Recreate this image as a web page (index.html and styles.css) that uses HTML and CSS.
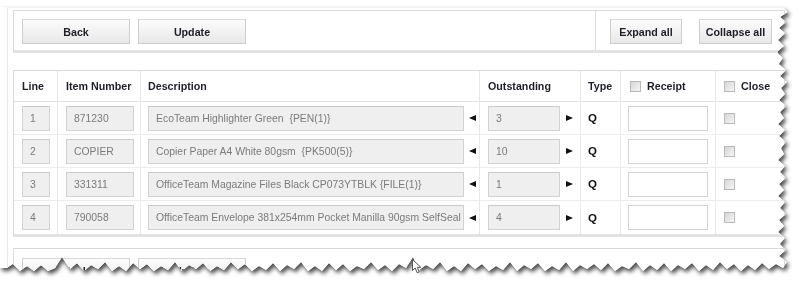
FILE: index.html
```html
<!DOCTYPE html>
<html lang="en">
<head>
    <meta charset="UTF-8">
    <meta name="viewport" content="width=device-width, initial-scale=1.0">
    <title>Receipt</title>
    <link rel="stylesheet" href="styles.css">
</head>
<body>

    <div class="frame">
        <div class="sheet">
            <div class="page">

                <!-- Top toolbar -->
                <div class="panel toolbar">
                    <div class="toolbar-left">
                        <button class="btn btn-wide">Back</button>
                        <button class="btn btn-wide">Update</button>
                    </div>
                    <div class="toolbar-right">
                        <button class="btn btn-expand">Expand all</button>
                        <button class="btn btn-collapse">Collapse all</button>
                    </div>
                </div>

                <!-- Lines -->
                <div class="panel lines">
                    <table class="lines-table">
                        <colgroup>
                            <col class="c-line">
                            <col class="c-item">
                            <col class="c-desc">
                            <col class="c-out">
                            <col class="c-type">
                            <col class="c-rec">
                            <col>
                        </colgroup>
                        <thead>
                            <tr>
                                <th>Line</th>
                                <th>Item Number</th>
                                <th class="pad7">Description</th>
                                <th>Outstanding</th>
                                <th class="pad7">Type</th>
                                <th class="pad9"><span class="check"></span>Receipt</th>
                                <th><span class="check"></span>Close</th>
                            </tr>
                        </thead>
                        <tbody>
                            <tr>
                                <td><input class="field f-line" value="1" readonly></td>
                                <td><input class="field f-item" value="871230" readonly></td>
                                <td class="pad7"><div class="cell-row"><input class="field f-desc" value="EcoTeam Highlighter Green  {PEN(1)}" readonly><span class="arrow-left"></span></div></td>
                                <td><div class="cell-row"><input class="field f-out" value="3" readonly><span class="arrow-right"></span></div></td>
                                <td class="pad7 type">Q</td>
                                <td class="pad7"><input class="receipt"></td>
                                <td class="top"><span class="check"></span></td>
                            </tr>
                            <tr>
                                <td><input class="field f-line" value="2" readonly></td>
                                <td><input class="field f-item" value="COPIER" readonly></td>
                                <td class="pad7"><div class="cell-row"><input class="field f-desc" value="Copier Paper A4 White 80gsm  {PK500(5)}" readonly><span class="arrow-left"></span></div></td>
                                <td><div class="cell-row"><input class="field f-out" value="10" readonly><span class="arrow-right"></span></div></td>
                                <td class="pad7 type">Q</td>
                                <td class="pad7"><input class="receipt"></td>
                                <td class="top"><span class="check"></span></td>
                            </tr>
                            <tr>
                                <td><input class="field f-line" value="3" readonly></td>
                                <td><input class="field f-item" value="331311" readonly></td>
                                <td class="pad7"><div class="cell-row"><input class="field f-desc" value="OfficeTeam Magazine Files Black CP073YTBLK {FILE(1)}" readonly><span class="arrow-left"></span></div></td>
                                <td><div class="cell-row"><input class="field f-out" value="1" readonly><span class="arrow-right"></span></div></td>
                                <td class="pad7 type">Q</td>
                                <td class="pad7"><input class="receipt"></td>
                                <td class="top"><span class="check"></span></td>
                            </tr>
                            <tr>
                                <td><input class="field f-line" value="4" readonly></td>
                                <td><input class="field f-item" value="790058" readonly></td>
                                <td class="pad7"><div class="cell-row"><input class="field f-desc" value="OfficeTeam Envelope 381x254mm Pocket Manilla 90gsm SelfSeal Board Back {ENV(250)}" readonly><span class="arrow-left"></span></div></td>
                                <td><div class="cell-row"><input class="field f-out" value="4" readonly><span class="arrow-right"></span></div></td>
                                <td class="pad7 type">Q</td>
                                <td class="pad7"><input class="receipt"></td>
                                <td class="top"><span class="check"></span></td>
                            </tr>
                        </tbody>
                    </table>
                </div>

                <!-- Bottom toolbar -->
                <div class="panel toolbar bottom-bar">
                    <div class="toolbar-left">
                        <button class="btn btn-wide">Back</button>
                        <button class="btn btn-wide">Update</button>
                    </div>
                </div>

            </div>
        </div>
    </div>

    <!-- mouse pointer left in the capture -->
    <svg class="pointer" width="11" height="15" viewBox="0 0 11 15">
        <path d="M0.5 0.5 L0.5 11.5 L3.2 9 L5.2 13.8 L7.2 12.9 L5.3 8.3 L8.8 8.3 Z" fill="#fff" stroke="#555" stroke-width="1"/>
    </svg>

</body>
</html>
```

FILE: styles.css
```css
body {
    margin: 0;
    padding: 0;
    background: white;
    font-family: "Liberation Sans", Arial, sans-serif;
    color: #222;
}
.frame {
    filter: drop-shadow(2px 3px 2px rgba(0, 0, 0, 0.7));
}
.sheet {
    width: 800px;
    height: 287px;
    box-sizing: border-box;
    padding: 7px 0 0 7px;
    background: white;
    overflow: hidden;
    clip-path: polygon(0 7px, 783px 7px, 788px 12px, 780px 17px, 786px 22px, 779px 28px, 785px 33px, 778px 40px, 784px 46px, 777px 52px, 783px 58px, 779px 64px, 786px 70px, 780px 76px, 787px 82px, 781px 88px, 785px 94px, 779px 100px, 786px 106px, 780px 112px, 784px 118px, 778px 124px, 785px 130px, 779px 136px, 786px 142px, 781px 148px, 784px 154px, 778px 160px, 785px 166px, 780px 172px, 786px 178px, 779px 184px, 784px 190px, 778px 196px, 785px 202px, 780px 208px, 786px 214px, 779px 220px, 784px 226px, 778px 232px, 785px 238px, 780px 244px, 786px 250px, 779px 256px, 787px 262px, 783px 268px, 776px 264px, 769px 269px, 762px 263px, 755px 270px, 748px 265px, 741px 271px, 734px 264px, 727px 269px, 720px 262px, 713px 270px, 706px 265px, 699px 271px, 692px 263px, 685px 269px, 678px 265px, 671px 271px, 664px 263px, 657px 270px, 650px 265px, 643px 271px, 636px 262px, 629px 269px, 622px 266px, 615px 271px, 608px 263px, 601px 270px, 594px 264px, 587px 269px, 580px 265px, 573px 271px, 566px 262px, 559px 270px, 552px 266px, 545px 271px, 538px 263px, 531px 269px, 524px 265px, 517px 271px, 510px 262px, 503px 270px, 496px 266px, 489px 271px, 482px 264px, 475px 269px, 468px 263px, 461px 271px, 454px 266px, 447px 271px, 440px 262px, 433px 269px, 426px 265px, 419px 270px, 413px 257px, 406px 268px, 399px 264px, 392px 271px, 385px 265px, 378px 270px, 371px 262px, 364px 269px, 357px 266px, 350px 271px, 343px 264px, 336px 270px, 329px 263px, 322px 271px, 315px 266px, 308px 271px, 301px 262px, 294px 269px, 287px 265px, 280px 271px, 273px 263px, 266px 270px, 259px 266px, 252px 271px, 245px 264px, 238px 269px, 231px 262px, 224px 270px, 217px 266px, 210px 271px, 203px 263px, 196px 269px, 189px 265px, 182px 271px, 175px 262px, 168px 270px, 161px 266px, 154px 271px, 147px 264px, 140px 269px, 133px 263px, 126px 271px, 119px 266px, 112px 271px, 105px 262px, 98px 269px, 91px 265px, 84px 271px, 77px 263px, 70px 269px, 62px 257px, 55px 268px, 48px 271px, 41px 265px, 34px 271px, 27px 266px, 20px 271px, 13px 264px, 7px 268px, 0 268px);
}
.page {
    border-left: 1px solid #ebebeb;
    border-top: 1px solid #f2f2f2;
    padding: 2px 0 0 5px;
    height: 400px;
}
.panel {
    width: 772px;
    box-sizing: border-box;
    background: white;
    border: 1px solid #dadada;
    border-bottom: 3px solid #e3e3e3;
}
.toolbar {
    display: flex;
}
.toolbar-left {
    flex: 1;
    display: flex;
    gap: 8px;
    padding: 8px 0 6px 8px;
}
.toolbar-right {
    width: 189px;
    box-sizing: border-box;
    border-left: 1px solid #dcdcdc;
    display: flex;
    gap: 17px;
    padding: 8px 0 6px 14px;
}
.btn {
    height: 25px;
    padding: 0;
    margin: 0;
    background: linear-gradient(#fcfcfc, #e8e8e8);
    border: 1px solid #cdcdcd;
    border-top-color: #d8d8d8;
    color: #1e1e28;
    font-family: "Liberation Sans", Arial, sans-serif;
    font-size: 10.7px;
    font-weight: bold;
    cursor: pointer;
}
.btn:hover {
    background: linear-gradient(#ffffff, #f0f0f0);
}
.btn-wide {
    width: 108px;
}
.btn-expand {
    width: 72px;
}
.btn-collapse {
    width: 73px;
}
.lines {
    margin-top: 17px;
}
.bottom-bar {
    margin-top: 11px;
    padding-top: 1px;
}
.lines-table {
    width: 100%;
    table-layout: fixed;
    border-collapse: separate;
    border-spacing: 0;
}
.c-line { width: 44px; }
.c-item { width: 83px; }
.c-desc { width: 339px; }
.c-out { width: 101px; }
.c-type { width: 40px; }
.c-rec { width: 95px; }
.lines-table th,
.lines-table td {
    box-sizing: border-box;
    padding: 0 0 0 8px;
    border-right: 1px solid #e8e8e8;
    border-bottom: 1px solid #ececec;
    text-align: left;
    white-space: nowrap;
}
.lines-table th:last-child,
.lines-table td:last-child {
    border-right: none;
}
.lines-table tbody tr:last-child td {
    border-bottom: none;
}
.lines-table th {
    height: 31px;
    font-size: 10.7px;
    font-weight: bold;
    color: #1e1e28;
    border-bottom-color: #e2e2e2;
}
.lines-table td {
    height: 33px;
}
.lines-table .pad7 {
    padding-left: 7px;
}
.lines-table .pad9 {
    padding-left: 9px;
}
.lines-table .top {
    vertical-align: top;
    padding-top: 6px;
}
.type {
    font-size: 11.5px;
    font-weight: bold;
    color: #111;
}
.cell-row {
    display: flex;
    align-items: center;
}
.field {
    display: block;
    height: 25px;
    box-sizing: border-box;
    margin: 0;
    padding: 0 0 0 7px;
    background: #efefef;
    border: 1px solid #d3d3d3;
    border-top-color: #cbcbcb;
    color: #7b7b7b;
    font-family: "Liberation Sans", Arial, sans-serif;
    font-size: 10.4px;
    outline: none;
}
.f-line { width: 28px; }
.f-item { width: 68px; }
.f-desc { width: 316px; }
.f-out { width: 72px; }
.receipt {
    display: block;
    width: 80px;
    height: 25px;
    box-sizing: border-box;
    margin: 0;
    padding: 0 4px;
    background: white;
    border: 1px solid #d3d3d3;
    font-family: "Liberation Sans", Arial, sans-serif;
    font-size: 10px;
}
.arrow-left {
    width: 0;
    height: 0;
    margin-left: 5px;
    border-top: 3.5px solid transparent;
    border-bottom: 3.5px solid transparent;
    border-right: 7px solid #111;
}
.arrow-right {
    width: 0;
    height: 0;
    margin-left: 6px;
    border-top: 3.5px solid transparent;
    border-bottom: 3.5px solid transparent;
    border-left: 7px solid #111;
}
.check {
    display: inline-block;
    width: 11px;
    height: 11px;
    box-sizing: border-box;
    vertical-align: -2px;
    margin-right: 6px;
    border: 1px solid #b9b9b9;
    background: linear-gradient(135deg, #d6d6d6, #f6f6f6);
}
.pointer {
    position: absolute;
    left: 412px;
    top: 259px;
}
```
